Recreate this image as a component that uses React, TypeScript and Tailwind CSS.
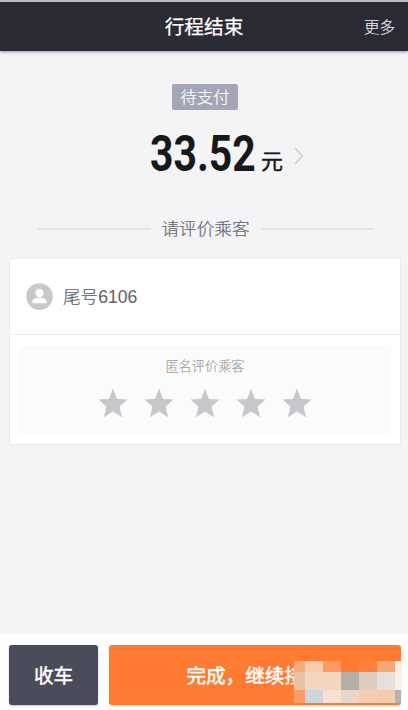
const mosaic = [
  ["bg-[#f3ad7d]", "bg-[#f6ccae]", "bg-[#fd9a63]", "bg-[#ff792f]", "bg-[#fc8039]", "bg-[#f8a678]", "bg-[#feede2]"],
  ["bg-[#e9c2a3]", "bg-[#f4d5c0]", "bg-[#f4d6be]", "bg-[#b3adab]", "bg-[#dccdc1]", "bg-[#e7dfdb]", "bg-[#fbefe6]"],
  ["bg-[#fb9a66]", "bg-[#ccd5dd]", "bg-[#f9e1cf]", "bg-[#e8d6c7]", "bg-[#f5ccb1]", "bg-[#f4cbaf]", "bg-[#b5b3b3]"],
];

function Star() {
  return (
    <svg viewBox="0 0 30 30" className="h-[30px] w-[30px]" fill="#c7c7cb">
      <path d="M15 0.5 18.9 10.9 29.6 11.4 21.6 18.4 24 29.2 15 23.4 6 29.2 8.4 18.4 0.4 11.4 11.1 10.9Z" />
    </svg>
  );
}

function Header() {
  return (
    <header className="relative z-10 flex h-[51px] shrink-0 items-center justify-center border-t-2 border-[#b9bac3] bg-[#2b2b35] pt-[3px] shadow-[0_1px_3px_rgba(60,60,75,0.5)]">
      <h1 className="text-[19.7px] leading-none text-white [-webkit-text-stroke:0.25px]">行程结束</h1>
      <span className="absolute right-[13px] text-[15.5px] leading-none font-light text-[#e6e6ea] [-webkit-text-stroke:0.2px]">更多</span>
    </header>
  );
}

function Amount() {
  return (
    <section className="flex flex-col items-center pt-[33px]">
      <span className="ml-[2px] flex h-[26px] w-[66px] items-center justify-center rounded-[2px] bg-[#a4a6b7] pt-px text-[16.3px] leading-none font-light text-white [-webkit-text-stroke:0.2px]">
        待支付
      </span>
      <div className="mt-[19px] flex h-[50px] w-full items-center pl-[150px] text-[#17181a]">
        <div className="w-[111px]">
          <span className="inline-block origin-left scale-x-[0.81] font-[Roboto] text-[50.5px] leading-[50px] font-bold">33.52</span>
        </div>
        <span className="mt-[15px] text-[22px] leading-none [-webkit-text-stroke:0.4px]">元</span>
        <svg viewBox="0 0 10 18" className="mt-[3px] ml-[11px] h-[18px] w-[10px]" fill="none" stroke="#c9c9cd" strokeWidth="1.3">
          <path d="M1 1 8.5 9 1 17" />
        </svg>
      </div>
    </section>
  );
}

function RatingCard() {
  return (
    <section className="mx-[9px] mt-[16px] h-[187px] w-[392px] rounded-[1px] border border-[#eaeaed] bg-white">
      <div className="flex h-[76px] items-center border-b border-[#ebebed] pl-[16px]">
        <svg viewBox="0 0 27 27" className="h-[27px] w-[27px]">
          <circle cx="13.5" cy="13.5" r="13.3" fill="#c8c8cc" />
          <circle cx="13.5" cy="10" r="4.2" fill="#fff" />
          <path d="M6.3 20.3V18.8C6.3 16 9.5 14.8 13.5 14.8S20.7 16 20.7 18.8V20.3Z" fill="#fff" />
        </svg>
        <span className="mt-[3px] ml-[10px] text-[17.6px] leading-none font-light text-[#606064]">
          <span className="[-webkit-text-stroke:0.2px]">尾号</span>6106
        </span>
      </div>
      <div className="mx-[9px] mt-[11px] flex h-[88px] flex-col items-center bg-[#fbfbfb] pt-[14px]">
        <p className="text-[13.2px] leading-none font-light text-[#a0a0a3] [-webkit-text-stroke:0.15px]">匿名评价乘客</p>
        <div className="mt-[15px] flex gap-[16px]">
          {[0, 1, 2, 3, 4].map((i) => (
            <Star key={i} />
          ))}
        </div>
      </div>
    </section>
  );
}

function Footer() {
  return (
    <footer className="mt-auto flex h-[76px] shrink-0 gap-[11px] bg-white pt-[11px] pr-[7px] pl-[9px] text-[19.6px] leading-none text-white [-webkit-text-stroke:0.45px]">
      <button className="h-[60px] w-[89px] rounded-[3px] bg-[#4b4c5b] pt-[3px] shadow-[0_1px_2px_rgba(75,76,91,0.35)]">收车</button>
      <button className="relative h-[60px] flex-1 rounded-[3px] bg-[#ff7b33] pt-[3px] shadow-[0_1px_2px_rgba(255,123,51,0.35)]">
        完成，继续接单
        <span className="absolute right-0 bottom-[2px] grid grid-cols-[11px_18px_18px_18px_18px_18px_6px] grid-rows-[11px_18px_13px]">
          {mosaic.flat().map((color, i) => (
            <span key={i} className={color} />
          ))}
        </span>
      </button>
    </footer>
  );
}

export default function App() {
  return (
    <div className="flex h-[710px] w-[408px] flex-col overflow-hidden bg-[#f4f4f6] font-['Liberation_Sans','Noto_Sans_CJK_SC',sans-serif]">
      <Header />
      <Amount />
      <div className="mt-[36px] flex h-[27px] items-center gap-[11px] pr-[34px] pl-[37px]">
        <div className="h-[2px] flex-1 bg-[#e4e4e7]" />
        <span className="pt-[3px] text-[17.6px] leading-none font-light text-[#67676b] [-webkit-text-stroke:0.2px]">请评价乘客</span>
        <div className="h-[2px] flex-1 bg-[#e4e4e7]" />
      </div>
      <RatingCard />
      <Footer />
    </div>
  );
}
